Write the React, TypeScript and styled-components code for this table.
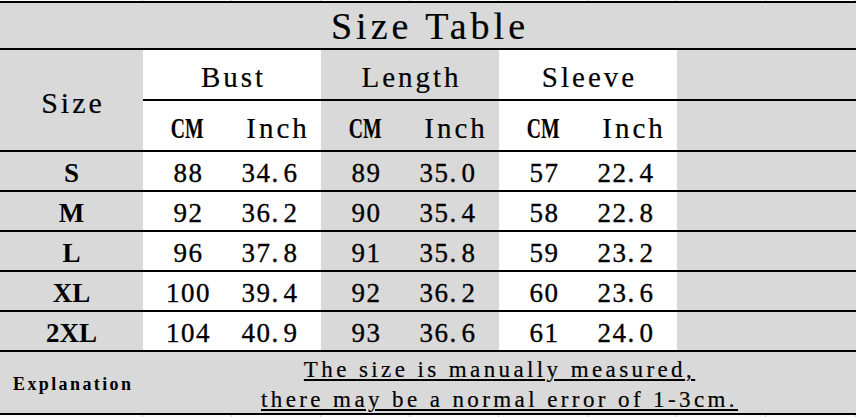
import React from "react";
import styled, { createGlobalStyle } from "styled-components";

const GlobalStyle = createGlobalStyle`
  html, body {
    margin: 0;
    padding: 0;
    background: #ffffff;
  }
  body {
    font-family: "Liberation Serif", "Times New Roman", serif;
    color: #000;
  }
`;

const GRAY = "#d9d9d9";
const COLUMNS = "143px repeat(7, 89px) 90px";

type Tone = "gray" | "white";

interface Row {
  size: string;
  bust: [string, string];
  length: [string, string];
  sleeve: [string, string];
}

const rows: Row[] = [
  { size: "S", bust: ["88", "34.6"], length: ["89", "35.0"], sleeve: ["57", "22.4"] },
  { size: "M", bust: ["92", "36.2"], length: ["90", "35.4"], sleeve: ["58", "22.8"] },
  { size: "L", bust: ["96", "37.8"], length: ["91", "35.8"], sleeve: ["59", "23.2"] },
  { size: "XL", bust: ["100", "39.4"], length: ["92", "36.2"], sleeve: ["60", "23.6"] },
  { size: "2XL", bust: ["104", "40.9"], length: ["93", "36.6"], sleeve: ["61", "24.0"] }
];

const groups: { label: string; tone: Tone; key: keyof Row }[] = [
  { label: "Bust", tone: "white", key: "bust" },
  { label: "Length", tone: "gray", key: "length" },
  { label: "Sleeve", tone: "white", key: "sleeve" }
];

// SimSun-style numbers: the decimal point takes a full half-width cell
const Num = ({ value }: { value: string }) => {
  const [whole, frac] = value.split(".");
  if (frac === undefined) return <>{value}</>;
  return (
    <>
      {whole}
      <Dot>.</Dot>
      {frac}
    </>
  );
};

const App = () => (
  <>
    <GlobalStyle />
    <Page>
      <Ruler $height={1}>
        {Array.from({ length: 9 }).map((_, i) => (
          <Tick key={i} />
        ))}
      </Ruler>
      <Sheet>
        <TitleCell $tone="gray" $span={9}>
          Size Table
        </TitleCell>

        <SizeHead $tone="gray" $rows={2}>
          Size
        </SizeHead>
        {groups.map((g) => (
          <GroupHead key={g.label} $tone={g.tone} $span={2}>
            {g.label}
          </GroupHead>
        ))}
        <Cell $tone="gray" $span={2} />

        {groups.map((g) => (
          <React.Fragment key={g.label}>
            <UnitCell $tone={g.tone}>
              <Squeeze>CM</Squeeze>
            </UnitCell>
            <UnitCell $tone={g.tone}>Inch</UnitCell>
          </React.Fragment>
        ))}
        <Cell $tone="gray" $span={2} />

        {rows.map((r) => (
          <React.Fragment key={r.size}>
            <SizeLabel $tone="gray">{r.size}</SizeLabel>
            {groups.map((g) => {
              const [cm, inch] = r[g.key] as [string, string];
              return (
                <React.Fragment key={g.label}>
                  <ValueCell $tone={g.tone}>{cm}</ValueCell>
                  <ValueCell $tone={g.tone} $inch>
                    <Num value={inch} />
                  </ValueCell>
                </React.Fragment>
              );
            })}
            <Cell $tone="gray" $span={2} />
          </React.Fragment>
        ))}

        <NoteLabel $tone="gray">Explanation</NoteLabel>
        <NoteText $tone="gray" $span={8}>
          <NoteLine>The size is manually measured,</NoteLine>
          <NoteLine>there may be a normal error of 1-3cm.</NoteLine>
        </NoteText>
      </Sheet>
      <Ruler $height={2}>
        {Array.from({ length: 9 }).map((_, i) => (
          <Tick key={i} />
        ))}
      </Ruler>
    </Page>
  </>
);

const Page = styled.div`
  width: 856px;
  height: 417px;
  overflow: hidden;
  background: #fbfbfb;
`;

const Ruler = styled.div<{ $height: number }>`
  display: grid;
  grid-template-columns: ${COLUMNS};
  height: ${(p) => p.$height}px;
`;

const Tick = styled.div`
  border-right: 1px solid #cdcdcd;
`;

const Sheet = styled.div`
  width: 856px;
  display: grid;
  grid-template-columns: ${COLUMNS};
  grid-template-rows: 47px 51px 51px repeat(5, 40px) 63px;
  border-top: 2px solid #000;
`;

const Cell = styled.div<{ $tone: Tone; $span?: number; $rows?: number }>`
  grid-column: span ${(p) => p.$span ?? 1};
  grid-row: span ${(p) => p.$rows ?? 1};
  background: ${(p) => (p.$tone === "gray" ? GRAY : "#ffffff")};
  border-bottom: 2px solid #000;
  box-sizing: border-box;
  display: flex;
  align-items: center;
  justify-content: center;
  padding-top: 5px;
  white-space: nowrap;
`;

const TitleCell = styled(Cell)`
  padding-top: 0;
  padding-left: 4px;
  font-size: 38px;
  letter-spacing: 4px;
  -webkit-text-stroke: 0.2px #000;
`;

const SizeHead = styled(Cell)`
  font-size: 30px;
  letter-spacing: 3px;
  padding-left: 3px;
  -webkit-text-stroke: 0.2px #000;
`;

const GroupHead = styled(Cell)`
  font-size: 29px;
  letter-spacing: 3px;
  padding-left: 3px;
  -webkit-text-stroke: 0.2px #000;
`;

const UnitCell = styled(Cell)`
  font-size: 29px;
  letter-spacing: 3px;
  padding-left: 3px;
  -webkit-text-stroke: 0.2px #000;
`;

const Squeeze = styled.span`
  display: inline-block;
  font-weight: 700;
  font-size: 29px;
  letter-spacing: 0;
  transform: scaleX(0.68);
  margin-left: -3px;
`;

const SizeLabel = styled(Cell)`
  font-size: 27px;
  font-weight: 700;
  letter-spacing: 0;
`;

const ValueCell = styled(Cell)<{ $inch?: boolean }>`
  font-size: 27px;
  letter-spacing: 1.5px;
  padding-right: ${(p) => (p.$inch ? "15px" : "0")};
  padding-left: 2px;
  -webkit-text-stroke: 0.35px #000;
`;

const Dot = styled.span`
  display: inline-block;
  width: 12px;
  text-align: left;
`;

const NoteLabel = styled(Cell)`
  justify-content: flex-start;
  padding-left: 13px;
  padding-top: 3px;
  font-size: 18px;
  font-weight: 700;
  letter-spacing: 2.4px;
`;

const NoteText = styled(Cell)`
  flex-direction: column;
  font-size: 23px;
  line-height: 30px;
  letter-spacing: 3.4px;
  -webkit-text-stroke: 0.2px #000;
`;

const NoteLine = styled.span`
  display: block;
  text-decoration: underline;
  text-decoration-thickness: 1.5px;
  text-underline-offset: 2px;
`;

export default App;
